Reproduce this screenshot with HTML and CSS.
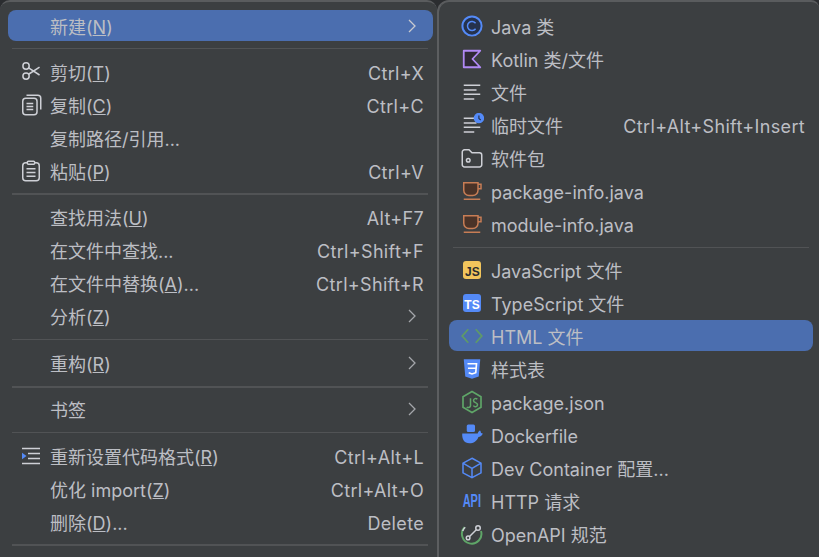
FILE: index.html
```html
<!DOCTYPE html>
<html lang="zh-CN">
<head>
<meta charset="utf-8">
<title>新建</title>
<link rel="stylesheet" href="styles.css">
</head>
<body>
<div class="desk">
  <section class="menu menu-main">
    <div class="row active"><span class="ico"></span><span class="label">新建(<u>N</u>)</span><svg class="chev" viewBox="0 0 8 14"><path d="M1 1l6 6-6 6"/></svg></div>
    <div class="sep"></div>
    <div class="row"><svg class="ico" viewBox="0 0 16 16" fill="none" stroke="#ced0d6"><circle cx="4.700" cy="4" r="2.100"/><circle cx="4.700" cy="10.700" r="2.100"/><path d="M6.400 5.200L13.700 10M6.400 9.500L13.700 4.700"/></svg><span class="label">剪切(<u>T</u>)</span><span class="key">Ctrl+X</span></div>
    <div class="row"><svg class="ico" viewBox="0 0 16 16" fill="none" stroke="#ced0d6"><rect x="2.500" y="3.500" width="9.500" height="11" rx="2"/><path d="M5 1.500h7.500a2 2 0 0 1 2 2V11M5 7h4.500M5 9h4.500M5 11h4.500"/></svg><span class="label">复制(<u>C</u>)</span><span class="key">Ctrl+C</span></div>
    <div class="row"><span class="ico"></span><span class="label">复制路径/引用...</span></div>
    <div class="row"><svg class="ico" viewBox="0 0 16 16" fill="none" stroke="#ced0d6"><rect x="2.500" y="2.500" width="11" height="12" rx="2"/><rect x="5.500" y="1.500" width="5" height="2" rx=".8" fill="#3c3f41"/><path d="M5 6.500h6M5 9h6M5 11.500h6"/></svg><span class="label">粘贴(<u>P</u>)</span><span class="key">Ctrl+V</span></div>
    <div class="sep sep-thick"></div>
    <div class="row"><span class="ico"></span><span class="label">查找用法(<u>U</u>)</span><span class="key">Alt+F7</span></div>
    <div class="row"><span class="ico"></span><span class="label">在文件中查找...</span><span class="key">Ctrl+Shift+F</span></div>
    <div class="row"><span class="ico"></span><span class="label">在文件中替换(<u>A</u>)...</span><span class="key">Ctrl+Shift+R</span></div>
    <div class="row"><span class="ico"></span><span class="label">分析(<u>Z</u>)</span><svg class="chev" viewBox="0 0 8 14"><path d="M1 1l6 6-6 6"/></svg></div>
    <div class="sep sep-late"></div>
    <div class="row"><span class="ico"></span><span class="label">重构(<u>R</u>)</span><svg class="chev" viewBox="0 0 8 14"><path d="M1 1l6 6-6 6"/></svg></div>
    <div class="sep sep-thick sep-shift"></div>
    <div class="row"><span class="ico"></span><span class="label">书签</span><svg class="chev" viewBox="0 0 8 14"><path d="M1 1l6 6-6 6"/></svg></div>
    <div class="sep sep-late"></div>
    <div class="row"><svg class="ico" viewBox="0 0 16 16"><path d="M2 3h12M6 6.300h8M6 9.600h8M2 13h12" stroke="#ced0d6" fill="none"/><path d="M2 5.800l3 2.200-3 2.200z" fill="#548af7"/></svg><span class="label">重新设置代码格式(<u>R</u>)</span><span class="key">Ctrl+Alt+L</span></div>
    <div class="row"><span class="ico"></span><span class="label">优化 import(<u>Z</u>)</span><span class="key">Ctrl+Alt+O</span></div>
    <div class="row"><span class="ico"></span><span class="label">删除(<u>D</u>)...</span><span class="key">Delete</span></div>
    <div class="sep sep-thick"></div>
  </section>
  <section class="menu menu-sub">
    <div class="row"><svg class="ico" viewBox="0 0 16 16" fill="none"><circle cx="8" cy="8" r="6.400" fill="#25324d" stroke="#548af7" stroke-width="1.300"/><path d="M10.400 6.200A3 3 0 1 0 10.400 9.800" stroke="#548af7"/></svg><span class="label">Java 类</span></div>
    <div class="row"><svg class="ico" viewBox="0 0 16 16"><path d="M2.500 2.500h11L8.300 8l5.200 5.500h-11z" fill="#2f2936" stroke="#b189f5" stroke-linejoin="round" stroke-width="1.200"/></svg><span class="label">Kotlin 类/文件</span></div>
    <div class="row"><svg class="ico" viewBox="0 0 16 16"><path d="M2.500 3.500h11M2.500 6.700h8.500M2.500 9.500h11M2.500 12.700h7" stroke="#ced0d6" fill="none"/></svg><span class="label">文件</span></div>
    <div class="row"><svg class="ico" viewBox="0 0 16 16"><path d="M2.500 3.500h8M2.500 6.700h8.500M2.500 9.500h11M2.500 12.700h7" stroke="#ced0d6" fill="none"/><circle cx="12.600" cy="3.400" r="3.500" fill="#548af7"/><path d="M12.600 1.600V3.700L13.800 4.600" stroke="#25324d" fill="none" stroke-width=".8"/></svg><span class="label">临时文件</span><span class="key">Ctrl+Alt+Shift+Insert</span></div>
    <div class="row"><svg class="ico" viewBox="0 0 16 16" fill="none" stroke="#ced0d6"><path d="M1.500 4a1.500 1.500 0 0 1 1.500-1.500h3L8 4.500h5A1.500 1.500 0 0 1 14.500 6v6.500A1.500 1.500 0 0 1 13 14H3a1.500 1.500 0 0 1-1.500-1.500z"/><circle cx="5.500" cy="9.500" r="1.200"/></svg><span class="label">软件包</span></div>
    <div class="row"><svg class="ico" viewBox="0 0 16 16"><path d="M2.500 2.500h9.500v5a3.500 3.500 0 0 1-3.500 3.500H6a3.500 3.500 0 0 1-3.500-3.500z" fill="#4a3328" stroke="#c77d55"/><path d="M12 3.500h2v3h-2M2.500 13.500h11" fill="none" stroke="#c77d55"/></svg><span class="label">package-info.java</span></div>
    <div class="row"><svg class="ico" viewBox="0 0 16 16"><path d="M2.500 2.500h9.500v5a3.500 3.500 0 0 1-3.500 3.500H6a3.500 3.500 0 0 1-3.500-3.500z" fill="#4a3328" stroke="#c77d55"/><path d="M12 3.500h2v3h-2M2.500 13.500h11" fill="none" stroke="#c77d55"/></svg><span class="label">module-info.java</span></div>
    <div class="sep sep-sub"></div>
    <div class="row"><svg class="ico" viewBox="0 0 16 16"><rect x="2" y="2" width="12" height="12" rx="2" fill="#f2c55c"/><text x="8.300" y="12" class="glyph" fill="#2b2d30">JS</text></svg><span class="label">JavaScript 文件</span></div>
    <div class="row"><svg class="ico" viewBox="0 0 16 16"><rect x="2" y="2" width="12" height="12" rx="2" fill="#548af7"/><text x="8" y="12" class="glyph" fill="#fff">TS</text></svg><span class="label">TypeScript 文件</span></div>
    <div class="row active"><svg class="ico" viewBox="0 0 16 16" fill="none" stroke="#5f9a68" stroke-width="1.200"><path d="M5.500 3.500L1.500 8l4 4.500M10.500 3.500l4 4.500-4 4.500"/></svg><span class="label">HTML 文件</span></div>
    <div class="row"><svg class="ico" viewBox="0 0 16 16"><path d="M2.500 1.500h11l-1 11.500L8 14.500 3.500 13z" fill="#548af7"/><path d="M5 4.500h6l-.5 6L8 11.300 5.800 10.500M5.300 7.500h5" fill="none" stroke="#fff" stroke-width="1.100"/></svg><span class="label">样式表</span></div>
    <div class="row"><svg class="ico" viewBox="0 0 16 16"><path d="M8 1l6 3.500v7L8 15l-6-3.500v-7z" fill="none" stroke="#5fa668" stroke-width="1.100"/><path d="M7 5.500v5a1.500 1.500 0 0 1-2.500.8M11.500 6.200A1.400 1.400 0 0 0 9 7c0 1.800 2.700 1 2.700 2.800a1.400 1.400 0 0 1-2.700.5" fill="none" stroke="#5fa668"/></svg><span class="label">package.json</span></div>
    <div class="row"><svg class="ico" viewBox="0 0 16 16" fill="#548af7"><rect x="4.500" y="1" width="5.500" height="5" rx="1"/><path d="M1.500 7h10.300c.3-1.200 1-1.900 1.600-2 .4.500.6 1 .6 1.600l1.200.4c-.5 1.500-1.800 2.200-2.900 2.300-1 2.800-3.300 4.200-6 4.200-3.500 0-5.100-2.800-4.800-6.500z"/></svg><span class="label">Dockerfile</span></div>
    <div class="row"><svg class="ico" viewBox="0 0 16 16" fill="none" stroke="#548af7"><path d="M8 1.500l6 3.300v6.400l-6 3.300-6-3.300V4.800zM2 4.800l6 3.400 6-3.400M8 8.200v6.300"/></svg><span class="label">Dev Container 配置...</span></div>
    <div class="row"><span class="ico ico-api"><span class="api">API</span></span><span class="label">HTTP 请求</span></div>
    <div class="row"><svg class="ico" viewBox="0 0 16 16" fill="none"><path d="M3 3.500A6.500 6.500 0 1 0 14 6" stroke="#5fa668" stroke-width="1.300"/><path d="M1.800 6A6.500 6.500 0 0 1 3.500 3.500" stroke="#ced0d6"/><path d="M6.200 9.800L11 5" stroke="#ced0d6"/><circle cx="5.400" cy="10.600" r="1.200" stroke="#ced0d6"/><circle cx="12" cy="4" r="1.500" stroke="#ced0d6"/></svg><span class="label">OpenAPI 规范</span></div>
  </section>
</div>
</body>
</html>
```
FILE: styles.css
```css
html, body {
  margin: 0;
  padding: 0;
  height: 100%;
  overflow: hidden;
  background: #2b2d30;
}
.desk {
  display: flex;
  height: 557px;
  width: 819px;
  font-family: Inter, "Noto Sans CJK SC", sans-serif;
  font-size: 18px;
  color: #bcbec4;
}
.menu {
  display: flex;
  flex-direction: column;
  box-sizing: border-box;
  background: #3c3f41;
  border-top: 2px solid #5a5c5e;
  padding-top: 7px;
  overflow: hidden;
}
.menu-main {
  flex: none;
  width: 437px;
  border-radius: 10px 10px 0 0;
  padding-left: 8px;
  padding-right: 4px;
}
.menu-sub {
  flex: 1;
  border-left: 2px solid #5c5e60;
  border-radius: 12px 8px 0 0;
  padding-left: 10px;
  padding-right: 6px;
}
.row {
  flex: none;
  display: flex;
  align-items: center;
  height: 31px;
  margin: 1px 0;
  padding: 0 8px 0 11px;
  border-radius: 8px;
  white-space: nowrap;
  line-height: 24px;
}
.menu-main .row {
  padding-right: 9px;
}
.row.active {
  background: #4b6eaf;
}
.ico {
  display: block;
  flex: none;
  width: 24px;
  height: 24px;
  margin-right: 7px;
}
.ico-api {
  display: flex;
  justify-content: center;
  align-items: center;
}
.label {
  flex: 1;
  padding-top: 4px;
}
.key {
  padding-top: 4px;
  letter-spacing: .33px;
}
.chev {
  flex: none;
  width: 8px;
  height: 14px;
  margin-right: 8px;
  fill: none;
  stroke: #a4a6aa;
  stroke-width: 1.300;
}
.active .chev {
  stroke: #c8cad0;
}
.sep {
  flex: none;
  height: 1px;
  margin: 6px 5px 6px 4px;
  background: #515355;
}
.sep-thick {
  height: 2px;
  margin-bottom: 5px;
}
.sep-late {
  margin-top: 7px;
}
.sep-shift {
  margin-top: 7px;
  margin-bottom: 4px;
}
.sep-sub {
  margin: 7px 4px 5px;
}
.glyph {
  font-family: "Liberation Sans", sans-serif;
  font-size: 8px;
  font-weight: 700;
  text-anchor: middle;
}
.api {
  flex: none;
  color: #548af7;
  font-family: "Liberation Sans", sans-serif;
  font-size: 19px;
  font-weight: 700;
  transform: scaleX(.58);
}
```
